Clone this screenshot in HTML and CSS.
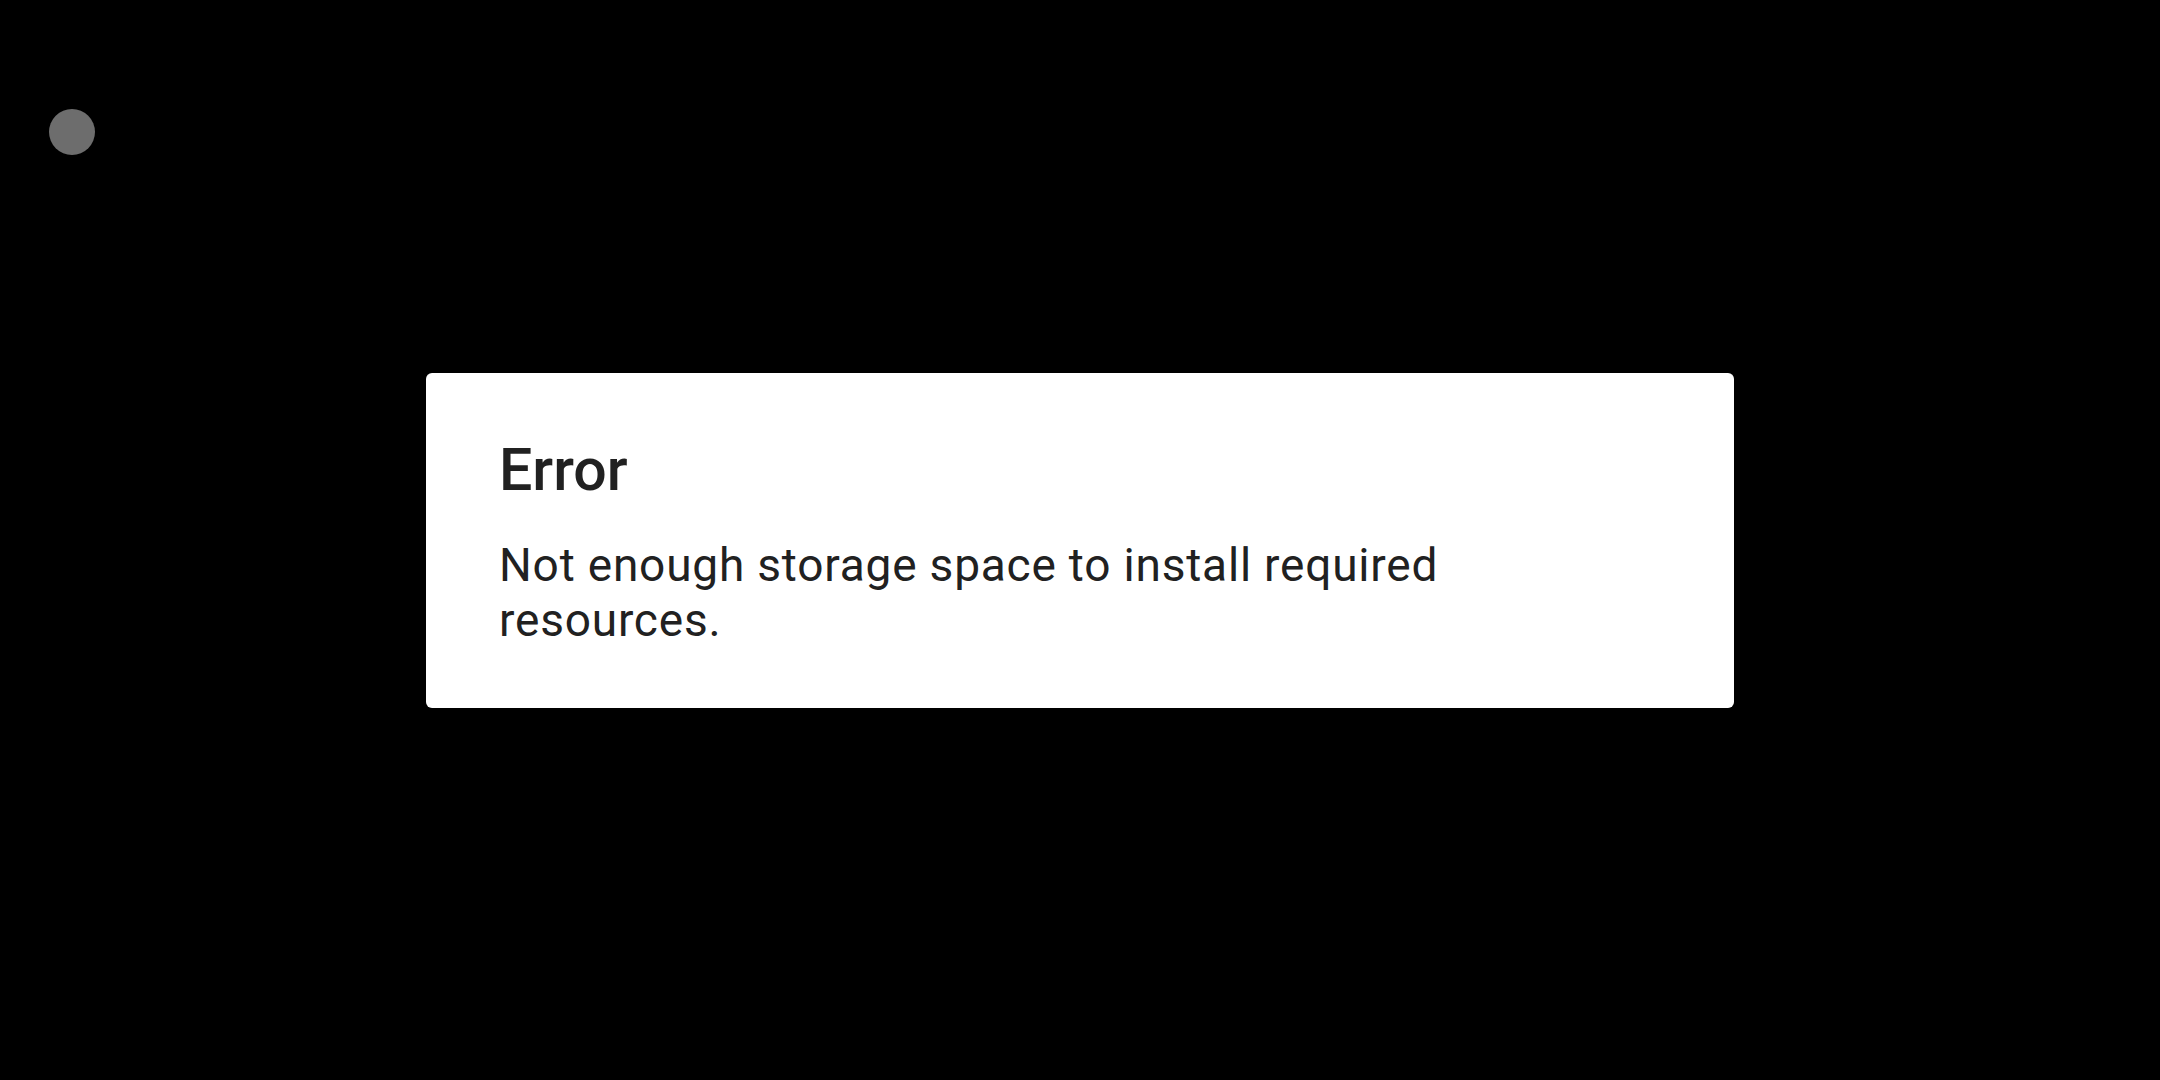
FILE: index.html
```html
<!DOCTYPE html>
<html>
<head>
<meta charset="utf-8">
<link rel="stylesheet" href="styles.css">
</head>
<body>
<div class="dot"></div>
<div class="screen">
  <div class="dialog">
    <div class="title">Error</div>
    <div class="message">Not enough storage space to install required resources.</div>
  </div>
</div>
</body>
</html>
```
FILE: styles.css
```css
html, body {
  margin: 0;
  padding: 0;
  background: #000;
  width: 2160px;
  height: 1080px;
  overflow: hidden;
}
.dot {
  position: absolute;
  left: 49px;
  top: 109px;
  width: 46px;
  height: 46px;
  border-radius: 50%;
  background: #6d6d6d;
}
.screen {
  width: 2160px;
  height: 1080px;
  display: flex;
  align-items: center;
  justify-content: center;
}
.dialog {
  box-sizing: border-box;
  width: 1308px;
  height: 335px;
  background: #fff;
  border-radius: 6px;
  padding: 62px 75px 0 73px;
  font-family: Roboto, "Noto Sans", sans-serif;
  color: #212121;
}
.title {
  font-size: 59px;
  font-weight: 500;
  line-height: 70px;
  margin-bottom: 33px;
}
.message {
  font-size: 46px;
  line-height: 55px;
  font-weight: 400;
  letter-spacing: 0.8px;
}
```
